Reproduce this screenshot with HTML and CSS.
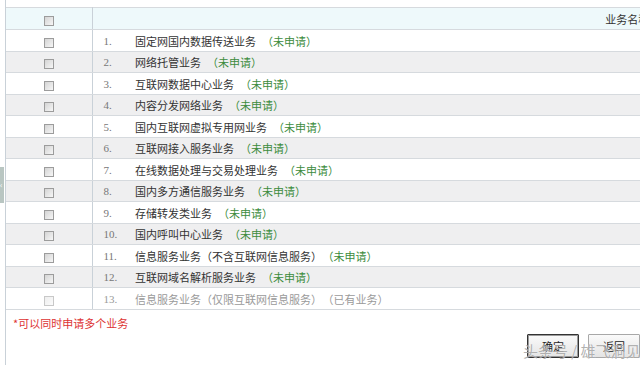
FILE: index.html
```html
<!DOCTYPE html>
<html lang="zh-CN">
<head>
    <meta charset="UTF-8">
    <title>业务申请</title>
    <link rel="stylesheet" href="styles.css">
</head>
<body>
    <div class="page">
        <div class="handle">&lsaquo;</div>
        <div class="frame">
            <table class="biz">
                <colgroup>
                    <col class="col-chk">
                    <col class="col-num">
                    <col class="col-name">
                </colgroup>
                <thead>
                    <tr>
                        <th class="chk"><input type="checkbox"></th>
                        <th class="title" colspan="2">业务名称</th>
                    </tr>
                </thead>
                <tbody>
                    <tr><td class="chk"><input type="checkbox"></td><td class="num">1.</td><td class="name">固定网国内数据传送业务<span class="status">（未申请）</span></td></tr>
                    <tr><td class="chk"><input type="checkbox"></td><td class="num">2.</td><td class="name">网络托管业务<span class="status">（未申请）</span></td></tr>
                    <tr><td class="chk"><input type="checkbox"></td><td class="num">3.</td><td class="name">互联网数据中心业务<span class="status">（未申请）</span></td></tr>
                    <tr><td class="chk"><input type="checkbox"></td><td class="num">4.</td><td class="name">内容分发网络业务<span class="status">（未申请）</span></td></tr>
                    <tr><td class="chk"><input type="checkbox"></td><td class="num">5.</td><td class="name">国内互联网虚拟专用网业务<span class="status">（未申请）</span></td></tr>
                    <tr><td class="chk"><input type="checkbox"></td><td class="num">6.</td><td class="name">互联网接入服务业务<span class="status">（未申请）</span></td></tr>
                    <tr><td class="chk"><input type="checkbox"></td><td class="num">7.</td><td class="name">在线数据处理与交易处理业务<span class="status">（未申请）</span></td></tr>
                    <tr><td class="chk"><input type="checkbox"></td><td class="num">8.</td><td class="name">国内多方通信服务业务<span class="status">（未申请）</span></td></tr>
                    <tr><td class="chk"><input type="checkbox"></td><td class="num">9.</td><td class="name">存储转发类业务<span class="status">（未申请）</span></td></tr>
                    <tr><td class="chk"><input type="checkbox"></td><td class="num">10.</td><td class="name">国内呼叫中心业务<span class="status">（未申请）</span></td></tr>
                    <tr><td class="chk"><input type="checkbox"></td><td class="num">11.</td><td class="name">信息服务业务（不含互联网信息服务）<span class="status">（未申请）</span></td></tr>
                    <tr><td class="chk"><input type="checkbox"></td><td class="num">12.</td><td class="name">互联网域名解析服务业务<span class="status">（未申请）</span></td></tr>
                    <tr class="disabled"><td class="chk"><input type="checkbox" disabled></td><td class="num">13.</td><td class="name">信息服务业务（仅限互联网信息服务）<span class="status">（已有业务）</span></td></tr>
                </tbody>
            </table>
            <p class="note">*可以同时申请多个业务</p>
            <div class="actions">
                <button class="primary">确定</button>
                <button>返回</button>
            </div>
        </div>
        <div class="watermark">头条号 / 雄飞洞见</div>
    </div>
</body>
</html>
```

FILE: styles.css
```css
html, body {
    margin: 0;
    padding: 0;
    background: #ffffff;
    overflow: hidden;
}
.page {
    position: relative;
    width: 640px;
    height: 365px;
    overflow: hidden;
    font-family: "Noto Sans CJK SC", "Liberation Sans", sans-serif;
    font-size: 11px;
    color: #333;
}
.frame {
    margin-left: 5px;
    padding-top: 7px;
    border-left: 1px solid #c9d1d8;
    height: 358px;
}
.biz {
    width: 1156px;
    border-collapse: collapse;
    table-layout: fixed;
}
.col-chk {
    width: 86px;
}
.col-num {
    width: 43px;
}
.col-name {
    width: 1027px;
}
.biz th,
.biz td {
    padding: 0;
    border-bottom: 1px solid #d6dade;
    white-space: nowrap;
    text-align: left;
}
.biz thead tr {
    height: 22px;
    background-color: #eef9fb;
}
.biz thead th {
    border-top: 1px solid #d6dade;
    font-weight: normal;
}
.biz .title {
    text-align: center;
    color: #333;
}
.biz tbody tr {
    height: 22px;
}
.biz tbody tr:nth-child(even) {
    height: 21px;
    background-color: #efeff0;
}
.biz .chk {
    text-align: center;
    border-right: 1px solid #c9d1d8;
}
.biz .num {
    padding-left: 11px;
    font-family: "Liberation Serif", serif;
    color: #777;
}
.status {
    margin-left: 6px;
    color: #3c8c3c;
}
.disabled .name,
.disabled .status,
.disabled .num {
    color: #9a9a9a;
}
input[type="checkbox"] {
    appearance: none;
    -webkit-appearance: none;
    width: 10px;
    height: 10px;
    margin: 0;
    vertical-align: middle;
    border: 1px solid #9c9c9c;
    background: linear-gradient(135deg, #d4d4d4, #f6f6f6);
}
input[type="checkbox"]:disabled {
    border-color: #c8c8c8;
    background: linear-gradient(135deg, #eeeeee, #fbfbfb);
}
.note {
    margin: 6px 0 0 7px;
    color: #dd3333;
    line-height: 14px;
}
.actions {
    display: flex;
    justify-content: flex-end;
    gap: 9px;
    margin-top: 4px;
}
.actions button {
    width: 52px;
    height: 24px;
    font-family: "Noto Sans CJK SC", sans-serif;
    font-size: 11px;
    color: #222;
    background: linear-gradient(#fafafa, #e4e4e4);
    border: 1px solid #a8a8a8;
    border-radius: 1px;
    padding: 0;
}
.actions .primary {
    border: 1px solid #333;
    box-shadow: inset 0 0 0 1px #9a9a9a;
}
.handle {
    position: absolute;
    left: 0;
    top: 167px;
    width: 4px;
    height: 36px;
    background-color: #b9c6c2;
    color: #ffffff;
    font-size: 8px;
    line-height: 36px;
    overflow: hidden;
}
.watermark {
    position: absolute;
    left: 523px;
    top: 340px;
    font-size: 15px;
    color: rgba(110, 110, 110, 0.55);
    text-shadow: 0 0 1px #ffffff;
    white-space: nowrap;
}
```
